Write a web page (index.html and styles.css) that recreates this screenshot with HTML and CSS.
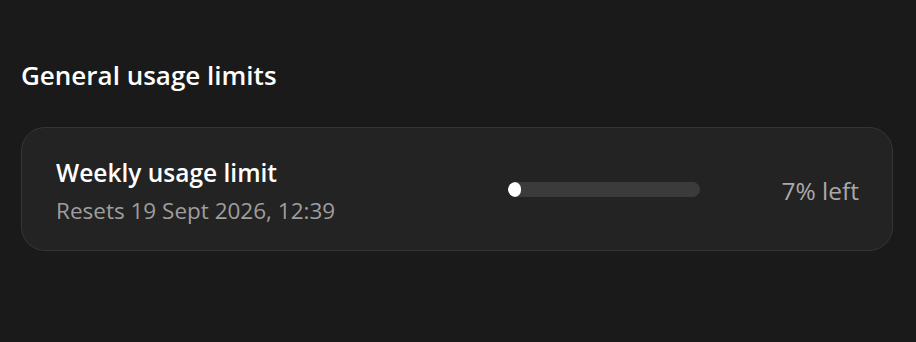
FILE: index.html
```html
<!DOCTYPE html>
<html>
<head>
<meta charset="utf-8">
<link rel="stylesheet" href="styles.css">
</head>
<body>
<main class="page">
  <h2 class="section-title">General usage limits</h2>
  <div class="card">
    <div class="info">
      <div class="title">Weekly usage limit</div>
      <div class="sub">Resets 19 Sept 2026, 12:39</div>
    </div>
    <div class="bar"><div class="fill" style="width:7%"></div></div>
    <div class="pct">7% left</div>
  </div>
</main>
</body>
</html>
```
FILE: styles.css
```css
html, body {
  margin: 0;
  padding: 0;
  background: #1a1a1a;
}
body {
  font-family: "Open Sans", "Noto Sans", sans-serif;
  color: #ffffff;
  width: 916px;
  height: 342px;
  overflow: hidden;
}
.page {
  padding: 55px 23px 0 21px;
}
.section-title {
  margin: 0 0 32px 0;
  font-size: 26px;
  font-weight: 600;
  line-height: 40px;
}
.card {
  box-sizing: border-box;
  height: 124px;
  border: 1px solid #353535;
  background: #232323;
  border-radius: 24px;
  padding: 0 33px 0 34px;
  display: grid;
  grid-template-columns: 1fr 192px 159px;
  align-items: center;
}
.info {
  margin-top: 5px;
}
.title {
  font-size: 24.5px;
  font-weight: 600;
  line-height: 30px;
}
.sub {
  font-size: 22.5px;
  color: #9e9e9e;
  line-height: 30px;
  margin-top: 8px;
}
.bar {
  height: 15px;
  border-radius: 8px;
  background: #3b3b3b;
  overflow: hidden;
  margin-top: 1px;
}
.fill {
  height: 100%;
  background: #ffffff;
  border-radius: 8px;
}
.pct {
  text-align: right;
  font-size: 24.5px;
  line-height: 30px;
  margin-top: 3px;
  color: #a9a9a9;
}
```
